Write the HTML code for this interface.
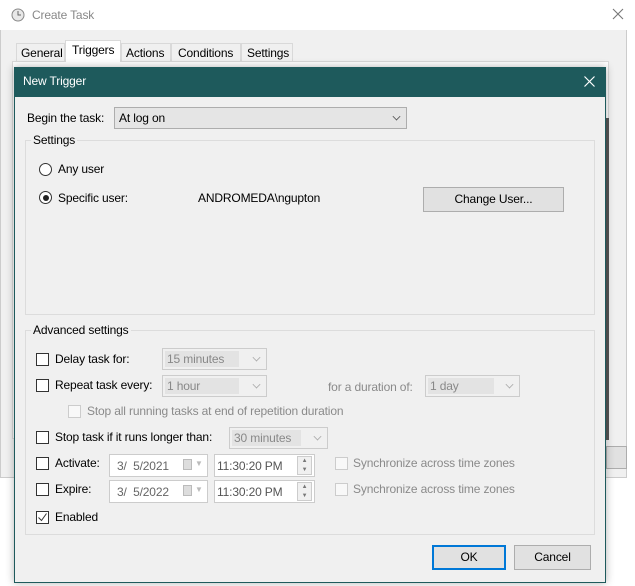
<!DOCTYPE html>
<html><head><style>
*{box-sizing:border-box;margin:0;padding:0}
body{width:635px;height:586px;background:#fff;font-family:"Liberation Sans",sans-serif;font-size:12px;letter-spacing:-0.15px;color:#000;position:relative;overflow:hidden}
.a{position:absolute;white-space:nowrap}
.cb{position:absolute;width:13px;height:13px;border:1px solid #333;background:#fff}
.cb.d{border-color:#ccc;background:#f8f8f8}
.combo{position:absolute;border:1px solid #adadad;background:#e5e5e5;height:22px;padding:3px 4px}
.combo.dis{background:#f0f0f0;border-color:#ccc;color:#888}
.combo.dis span.in{background:#e3e3e3;display:inline-block;width:78%;margin:-1px 0 0 -2px;padding:1px 2px}
.chev{position:absolute;right:6px;top:5px;width:7px;height:7px;border-right:1px solid #555;border-bottom:1px solid #555;transform:rotate(45deg) scale(.8)}
.dis .chev{border-color:#aaa}
.btn{position:absolute;border:1px solid #adadad;background:#e1e1e1;text-align:center;line-height:22px}
.grp{position:absolute;border:1px solid #dcdcdc}
.gray{color:#8a8a8a}
</style></head><body>
<div class="a" style="left:0;top:30px;width:627px;height:448px;background:#f0f0f0;border:1px solid #ccc;border-top:none"></div>
<svg class="a" style="left:11px;top:8px" width="14" height="14"><circle cx="7" cy="7" r="6" fill="#e8e8e8" stroke="#888"/><path d="M7 3v4h3" stroke="#666" fill="none"/></svg>
<div class="a" style="left:32px;top:8px;color:#888;font-size:12px">Create Task</div>
<svg class="a" style="left:612px;top:8px" width="12" height="12"><path d="M1 1l10 10M11 1L1 11" stroke="#777" stroke-width="1.1"/></svg>
<div class="a" style="left:12px;top:61px;width:597px;height:378px;background:#fff;border:1px solid #d9d9d9"></div>
<div class="a" style="left:16px;top:43px;width:49px;height:19px;border:1px solid #d9d9d9;background:#f0f0f0;padding:2px 4px">General</div>
<div class="a" style="left:65px;top:40px;width:56px;height:22px;border:1px solid #d9d9d9;border-bottom:none;background:#fff;padding:2px 6px">Triggers</div>
<div class="a" style="left:121px;top:43px;width:50px;height:19px;border:1px solid #d9d9d9;background:#f0f0f0;padding:2px 4px">Actions</div>
<div class="a" style="left:171px;top:43px;width:70px;height:19px;border:1px solid #d9d9d9;background:#f0f0f0;padding:2px 6px">Conditions</div>
<div class="a" style="left:241px;top:43px;width:52px;height:19px;border:1px solid #d9d9d9;background:#f0f0f0;padding:2px 5px">Settings</div>
<div class="a" style="left:606px;top:118px;width:3px;height:322px;background:#555"></div>
<div class="a" style="left:606px;top:446px;width:21px;height:23px;border:1px solid #adadad;background:#e1e1e1"></div>

<div class="a" style="left:14px;top:67px;width:592px;height:516px;background:#f0f0f0;border:1px solid #1e5a5c;box-shadow:0 0 8px rgba(0,0,0,.3)"></div>
<div class="a" style="left:14px;top:67px;width:592px;height:30px;background:#1e5a5c"></div>
<div class="a" style="left:23px;top:74px;color:#fff;font-size:12px">New Trigger</div>
<svg class="a" style="left:584px;top:76px" width="11" height="11"><path d="M0.5 0.5l10 10M10.5 0.5l-10 10" stroke="#fff" stroke-width="1.2"/></svg>

<div class="a" style="left:27px;top:111px">Begin the task:</div>
<div class="combo" style="left:114px;top:107px;width:293px">At log on<span class="chev"></span></div>

<div class="grp" style="left:25px;top:140px;width:570px;height:175px"></div>
<div class="a" style="left:31px;top:133px;background:#f0f0f0;padding:0 2px">Settings</div>
<div class="a" style="left:39px;top:163px;width:13px;height:13px;border:1px solid #333;border-radius:50%;background:#fff"></div>
<div class="a" style="left:58px;top:162px">Any user</div>
<div class="a" style="left:39px;top:191px;width:13px;height:13px;border:1px solid #333;border-radius:50%;background:#fff"><div style="margin:2.5px;width:6px;height:6px;border-radius:50%;background:#222"></div></div>
<div class="a" style="left:58px;top:191px">Specific user:</div>
<div class="a" style="left:198px;top:191px">ANDROMEDA\ngupton</div>
<div class="btn" style="left:423px;top:187px;width:141px;height:25px">Change User...</div>

<div class="grp" style="left:25px;top:330px;width:570px;height:205px"></div>
<div class="a" style="left:31px;top:323px;background:#f0f0f0;padding:0 2px">Advanced settings</div>

<div class="cb" style="left:36px;top:353px"></div><div class="a" style="left:55px;top:352px">Delay task for:</div>
<div class="combo dis" style="left:162px;top:348px;width:105px"><span class="in">15 minutes</span><span class="chev"></span></div>
<div class="cb" style="left:36px;top:379px"></div><div class="a" style="left:55px;top:378px">Repeat task every:</div>
<div class="combo dis" style="left:162px;top:375px;width:105px"><span class="in">1 hour</span><span class="chev"></span></div>
<div class="a gray" style="left:328px;top:380px">for a duration of:</div>
<div class="combo dis" style="left:425px;top:375px;width:95px"><span class="in">1 day</span><span class="chev"></span></div>
<div class="cb d" style="left:68px;top:405px"></div><div class="a gray" style="left:87px;top:404px">Stop all running tasks at end of repetition duration</div>
<div class="cb" style="left:36px;top:431px"></div><div class="a" style="left:55px;top:430px">Stop task if it runs longer than:</div>
<div class="combo dis" style="left:229px;top:427px;width:99px"><span class="in">30 minutes</span><span class="chev"></span></div>

<div class="cb" style="left:36px;top:457px"></div><div class="a" style="left:55px;top:456px">Activate:</div>
<div class="a" style="left:109px;top:454px;width:99px;height:23px;border:1px solid #ccc;background:#fff;padding:4px 7px;color:#666">3/&nbsp; 5/2021</div>
<div class="a" style="left:183px;top:459px;width:9px;height:11px;border:1px solid #bbb;background:#ddd"></div><div class="a" style="left:195px;top:459px;color:#bbb;font-size:8px">▼</div>
<div class="a" style="left:214px;top:454px;width:101px;height:23px;border:1px solid #ccc;background:#fff;padding:4px 2px;color:#555">11:30:20 PM</div>
<div class="a" style="left:297px;top:456px;width:15px;height:19px;border:1px solid #ccc;background:#f0f0f0;font-size:6px;color:#777;text-align:center;line-height:9px">▲<br>▼</div>
<div class="cb d" style="left:335px;top:457px"></div><div class="a gray" style="left:353px;top:456px">Synchronize across time zones</div>

<div class="cb" style="left:36px;top:483px"></div><div class="a" style="left:55px;top:482px">Expire:</div>
<div class="a" style="left:109px;top:480px;width:99px;height:23px;border:1px solid #ccc;background:#fff;padding:4px 7px;color:#666">3/&nbsp; 5/2022</div>
<div class="a" style="left:183px;top:485px;width:9px;height:11px;border:1px solid #bbb;background:#ddd"></div><div class="a" style="left:195px;top:485px;color:#bbb;font-size:8px">▼</div>
<div class="a" style="left:214px;top:480px;width:101px;height:23px;border:1px solid #ccc;background:#fff;padding:4px 2px;color:#555">11:30:20 PM</div>
<div class="a" style="left:297px;top:482px;width:15px;height:19px;border:1px solid #ccc;background:#f0f0f0;font-size:6px;color:#777;text-align:center;line-height:9px">▲<br>▼</div>
<div class="cb d" style="left:335px;top:483px"></div><div class="a gray" style="left:353px;top:482px">Synchronize across time zones</div>

<div class="cb" style="left:36px;top:511px"><svg width="11" height="11" style="position:absolute;left:0;top:0"><path d="M1.5 5.5l3 3 5-7" stroke="#333" fill="none"/></svg></div>
<div class="a" style="left:55px;top:510px">Enabled</div>

<div class="btn" style="left:432px;top:545px;width:74px;height:25px;border:2px solid #0078d7;line-height:21px">OK</div>
<div class="btn" style="left:514px;top:545px;width:77px;height:25px">Cancel</div>
</body></html>
